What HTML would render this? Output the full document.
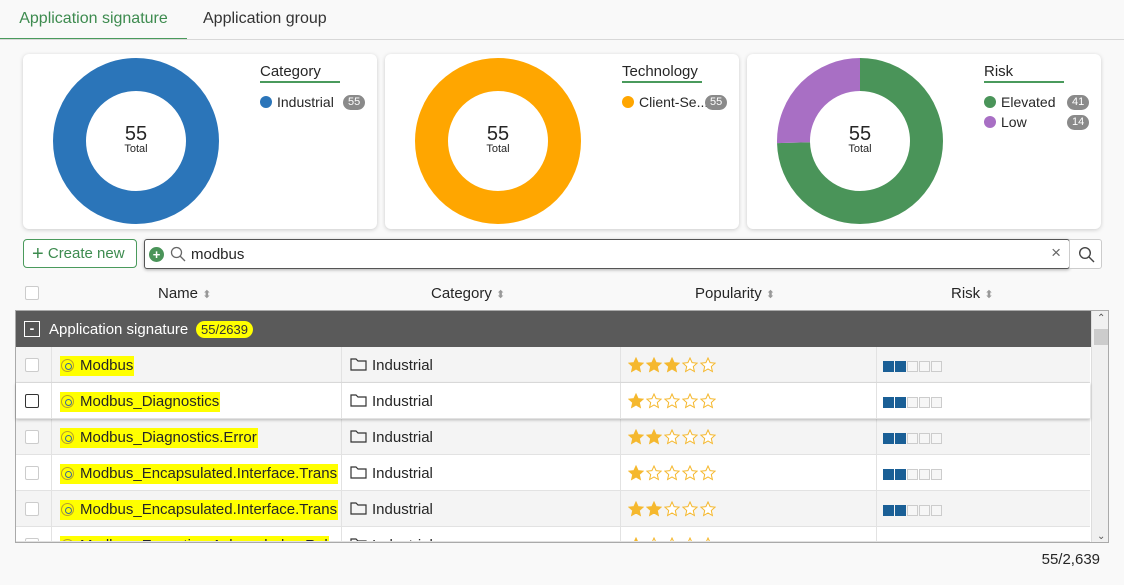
<!DOCTYPE html>
<html><head><meta charset="utf-8"><style>
*{box-sizing:border-box;margin:0;padding:0}
body{width:1124px;height:585px;background:#f9f9f9;font-family:"Liberation Sans",sans-serif;color:#262626;position:relative;overflow:hidden;font-size:14px}
.abs{position:absolute}
.tab{position:absolute;top:0;height:40px;line-height:38px;font-size:16px}
.card{position:absolute;top:54px;height:175px;width:354px;background:#fff;border-radius:6px;box-shadow:0 1px 4px rgba(0,0,0,.18)}
.ctr{position:absolute;left:63px;top:69px;width:100px;text-align:center}
.ctr b{display:block;font-size:20px;font-weight:normal;line-height:22px}
.ctr span{font-size:11px;display:block;margin-top:-2px}
.lt{position:absolute;left:237px;top:9px;font-size:15px;border-bottom:2px solid #4a9a5c;padding-bottom:1px;width:80px}
.li{position:absolute;left:237px;font-size:14px;display:flex;align-items:center}
.dot{width:12px;height:12px;border-radius:50%;margin-right:5px}
.bdg{position:absolute;background:#8a8a8a;color:#fff;font-size:11px;border-radius:8px;height:15px;line-height:15px;padding:0 5px}
.row{position:absolute;left:16px;width:1074px;height:36px;border-bottom:1px solid #e2e2e2}
.row div{position:absolute;top:0;height:35px;line-height:38px}
.cb{left:9px;top:11px!important;width:14px;height:14px!important;border:1px solid #ccc;border-radius:2px;background:#fff}
.nm{left:44px;font-size:15px;width:278px;overflow:hidden;white-space:nowrap}
.nm span{background:#ffff00;padding:1px 1px 2px 1px}
.cat{left:334px;font-size:15px}
.sep{width:1px;background:#e2e2e2}
.hl{display:inline-block;width:13px;height:13px;border:1.5px solid #b8a02a;border-radius:50%;vertical-align:-2px;margin-right:6px;position:relative}
.hl:after{content:"";position:absolute;left:2.5px;top:2.5px;width:5px;height:5px;border:1.3px solid #3a6a9a;border-radius:50%}
</style></head><body>
<div class="tab" style="left:0;width:187px;text-align:center;color:#3d8b4f;border-bottom:2px solid #4a9a5c">Application signature</div>
<div class="tab" style="left:203px;color:#333">Application group</div>
<div class="abs" style="left:0;top:39px;width:1124px;height:1px;background:#d8d8d8"></div>

<div class="card" style="left:23px">
<svg class="abs" style="left:30px;top:4px" width="166" height="166"><circle cx="83" cy="83" r="66.5" fill="none" stroke="#2b75b9" stroke-width="33"/></svg>
<div class="ctr"><b>55</b><span>Total</span></div>
<div class="lt">Category</div>
<div class="li" style="top:40px"><div class="dot" style="background:#2b75b9"></div>Industrial</div>
<div class="bdg" style="left:320px;top:41px">55</div>
</div>
<div class="card" style="left:385px">
<svg class="abs" style="left:30px;top:4px" width="166" height="166"><circle cx="83" cy="83" r="66.5" fill="none" stroke="#ffa600" stroke-width="33"/></svg>
<div class="ctr"><b>55</b><span>Total</span></div>
<div class="lt">Technology</div>
<div class="li" style="top:40px"><div class="dot" style="background:#ffa600"></div>Client-Se...</div>
<div class="bdg" style="left:320px;top:41px">55</div>
</div>
<div class="card" style="left:747px">
<svg class="abs" style="left:30px;top:4px" width="166" height="166"><g transform="rotate(-90 83 83)"><circle cx="83" cy="83" r="66.5" fill="none" stroke="#4a9459" stroke-width="33" stroke-dasharray="311.5 500"/><circle cx="83" cy="83" r="66.5" fill="none" stroke="#a86fc4" stroke-width="33" stroke-dasharray="0 311.5 106.3 100"/></g></svg>
<div class="ctr"><b>55</b><span>Total</span></div>
<div class="lt">Risk</div>
<div class="li" style="top:40px"><div class="dot" style="background:#4a9459"></div>Elevated</div>
<div class="bdg" style="left:320px;top:41px">41</div>
<div class="li" style="top:60px"><div class="dot" style="background:#a86fc4"></div>Low</div>
<div class="bdg" style="left:320px;top:61px">14</div>
</div>

<div class="abs" style="left:23px;top:239px;width:114px;height:29px;border:1px solid #4a9a5c;border-radius:4px;background:#fff;color:#3d8b4f;font-size:15px;line-height:27px;padding-left:8px"><span style="font-size:20px;vertical-align:-2px">+</span> Create new</div>
<div class="abs" style="left:144px;top:239px;width:926px;height:30px;border:1px solid #555;border-radius:3px;background:#fff;box-shadow:0 1px 3px rgba(0,0,0,.3)">
<div class="abs" style="left:4px;top:7px;width:15px;height:15px;border-radius:50%;background:#4a9459;color:#fff;font-size:13px;line-height:15px;text-align:center;font-weight:bold">+</div>
<svg class="abs" style="left:25px;top:6px" width="16" height="16"><circle cx="6.5" cy="6.5" r="5" fill="none" stroke="#666" stroke-width="1.3"/><path d="M10 10l5 5" stroke="#666" stroke-width="1.3"/></svg>
<div class="abs" style="left:46px;top:6px;font-size:15px">modbus</div>
<div class="abs" style="right:8px;top:3px;font-size:17px;color:#666">×</div>
</div>
<div class="abs" style="left:1069px;top:239px;width:33px;height:30px;border:1px solid #ccc;border-radius:0 3px 3px 0;background:#fff">
<svg class="abs" style="left:8px;top:6px" width="17" height="17"><circle cx="7" cy="7" r="5.3" fill="none" stroke="#444" stroke-width="1.4"/><path d="M11 11l5 5" stroke="#444" stroke-width="1.4"/></svg></div>

<div class="abs" style="left:25px;top:286px;width:14px;height:14px;border:1px solid #ccc;border-radius:2px;background:#fff"></div>
<div class="abs" style="left:158px;top:285px;font-size:15px">Name <span style="color:#999;font-size:11px">⬍</span></div>
<div class="abs" style="left:431px;top:285px;font-size:15px">Category <span style="color:#999;font-size:11px">⬍</span></div>
<div class="abs" style="left:695px;top:285px;font-size:15px">Popularity <span style="color:#999;font-size:11px">⬍</span></div>
<div class="abs" style="left:951px;top:285px;font-size:15px">Risk <span style="color:#999;font-size:11px">⬍</span></div>

<div class="abs" style="left:15px;top:310px;width:1094px;height:233px;border:1px solid #aaa;background:#fff;overflow:hidden">
<div class="abs" style="left:0;top:0;width:1075px;height:36px;background:#5a5a5a;color:#fff">
<div class="abs" style="left:8px;top:10px;width:16px;height:16px;border:1.5px solid #fff;background:#555;text-align:center;line-height:12px;font-weight:bold">-</div>
<div class="abs" style="left:33px;top:10px;font-size:15px">Application signature</div>
<div class="abs" style="left:180px;top:10px;background:#ffff00;color:#333;border-radius:9px;font-size:13px;padding:0 5px;height:17px;line-height:17px">55/2639</div>
</div>
<div class="abs" style="left:1075px;top:0;width:18px;height:233px;background:#f0f0f0;border-left:1px solid #ddd"><div class="abs" style="left:5px;top:2px;font-size:10px;color:#555">⌃</div><div class="abs" style="left:2px;top:18px;width:14px;height:16px;background:#ccc"></div><div class="abs" style="left:5px;bottom:2px;font-size:10px;color:#555">⌄</div></div>
</div>

<svg width="0" height="0" style="position:absolute"><defs><path id="st" d="M8 1l2.1 4.6 5 .5-3.8 3.4 1.1 5L8 12 3.6 14.5l1.1-5L.9 6.1l5-.5z"/></defs></svg>
<div id="rows"></div>
<div class="abs" style="right:24px;top:551px;font-size:15px">55/2,639</div>
<script>
var d=[["Modbus",3,"#f4f4f4"],["Modbus_Diagnostics",1,"#fff"],["Modbus_Diagnostics.Error",2,"#f4f4f4"],["Modbus_Encapsulated.Interface.Transp",1,"#fff"],["Modbus_Encapsulated.Interface.Transp",2,"#f4f4f4"],["Modbus_Exception.Acknowledge.Rel",1,"#fff"]];
var h="";
d.forEach(function(r,i){var top=347+i*36;var hh=i==5?15:36;
var st="";for(var k=0;k<5;k++){st+='<svg width="16" height="16" style="margin-right:2px;vertical-align:-2px"><use href="#st" fill="'+(k<r[1]?'#f5b82e':'#fff')+'" stroke="#f5b82e" stroke-width="1"/></svg>';}
var rk="";for(var k=0;k<5;k++){rk+='<span style="display:inline-block;width:11px;height:11px;margin-right:1px;vertical-align:-1px;'+(k<2?'background:'+(i==5&&k==0?'#4a9459':'#1a5f96'):'background:#f6f6f6;border:1px solid #ccc')+'"></span>';}
h+='<div class="row" style="top:'+top+'px;height:'+hh+'px;overflow:hidden;background:'+r[2]+(i==1?';box-shadow:0 1px 3px rgba(0,0,0,.25);z-index:2':'')+'">'+
'<div class="cb" style="'+(i==1?'border-color:#333':'')+'"></div><div class="sep" style="left:35px"></div>'+
'<div class="nm"><span><i class="hl"></i>'+r[0]+'</span></div><div class="sep" style="left:325px"></div>'+
'<div class="cat"><svg width="17" height="14" style="vertical-align:-1px;margin-right:5px"><path d="M1 2h5l2 2h8v9H1z" fill="none" stroke="#333" stroke-width="1.2"/></svg>Industrial</div><div class="sep" style="left:604px"></div>'+
'<div style="left:612px">'+st+'</div><div class="sep" style="left:860px"></div><div style="left:867px">'+rk+'</div></div>';});
document.getElementById("rows").innerHTML=h;
</script>
</body></html>
